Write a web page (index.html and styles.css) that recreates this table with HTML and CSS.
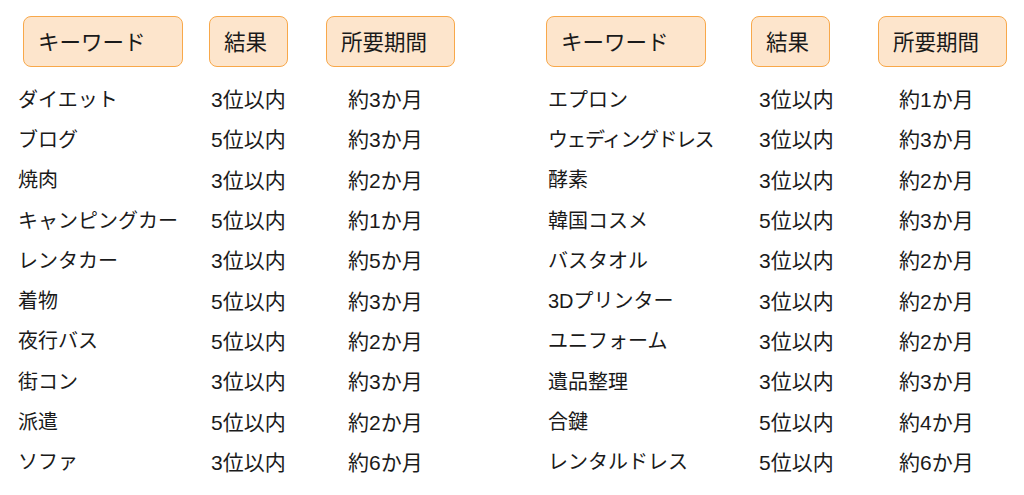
FILE: index.html
```html
<!DOCTYPE html>
<html lang="ja">
<head>
<meta charset="utf-8">
<link rel="stylesheet" href="styles.css">
</head>
<body>
<div class="page">
  <section class="panel panel-left">
    <div class="heads">
      <div class="head head-kw">キーワード</div>
      <div class="head head-res">結果</div>
      <div class="head head-per">所要期間</div>
    </div>
    <div class="rows">
      <div class="row"><span class="kw">ダイエット</span><span>3位以内</span><span>約3か月</span></div>
      <div class="row"><span class="kw">ブログ</span><span>5位以内</span><span>約3か月</span></div>
      <div class="row"><span class="kw">焼肉</span><span>3位以内</span><span>約2か月</span></div>
      <div class="row"><span class="kw">キャンピングカー</span><span>5位以内</span><span>約1か月</span></div>
      <div class="row"><span class="kw">レンタカー</span><span>3位以内</span><span>約5か月</span></div>
      <div class="row"><span class="kw">着物</span><span>5位以内</span><span>約3か月</span></div>
      <div class="row"><span class="kw">夜行バス</span><span>5位以内</span><span>約2か月</span></div>
      <div class="row"><span class="kw">街コン</span><span>3位以内</span><span>約3か月</span></div>
      <div class="row"><span class="kw">派遣</span><span>5位以内</span><span>約2か月</span></div>
      <div class="row"><span class="kw">ソファ</span><span>3位以内</span><span>約6か月</span></div>
    </div>
  </section>
  <section class="panel panel-right">
    <div class="heads">
      <div class="head head-kw">キーワード</div>
      <div class="head head-res">結果</div>
      <div class="head head-per">所要期間</div>
    </div>
    <div class="rows">
      <div class="row"><span class="kw">エプロン</span><span>3位以内</span><span>約1か月</span></div>
      <div class="row"><span class="kw kw-tight">ウェディングドレス</span><span>3位以内</span><span>約3か月</span></div>
      <div class="row"><span class="kw">酵素</span><span>3位以内</span><span>約2か月</span></div>
      <div class="row"><span class="kw">韓国コスメ</span><span>5位以内</span><span>約3か月</span></div>
      <div class="row"><span class="kw">バスタオル</span><span>3位以内</span><span>約2か月</span></div>
      <div class="row"><span class="kw">3Dプリンター</span><span>3位以内</span><span>約2か月</span></div>
      <div class="row"><span class="kw">ユニフォーム</span><span>3位以内</span><span>約2か月</span></div>
      <div class="row"><span class="kw">遺品整理</span><span>3位以内</span><span>約3か月</span></div>
      <div class="row"><span class="kw">合鍵</span><span>5位以内</span><span>約4か月</span></div>
      <div class="row"><span class="kw">レンタルドレス</span><span>5位以内</span><span>約6か月</span></div>
    </div>
  </section>
</div>
</body>
</html>
```
FILE: styles.css
```css
html, body {
  margin: 0;
  padding: 0;
  background: #ffffff;
}
body {
  font-family: "Liberation Sans", "Noto Sans CJK JP", sans-serif;
  color: #1a1a1a;
  width: 1024px;
  height: 495px;
  overflow: hidden;
}
.page {
  display: flex;
  padding-top: 16px;
}
.panel-left {
  width: 530px;
  padding-left: 18px;
}
.panel-right {
  flex: 1;
}
.heads {
  display: flex;
  height: 51px;
}
.head {
  box-sizing: border-box;
  height: 51px;
  display: flex;
  align-items: center;
  padding-left: 14px;
  padding-bottom: 2px;
  background: #fde5cc;
  border: 1.5px solid #f8a84a;
  border-radius: 8px;
  font-size: 21.5px;
}
.head-kw { width: 160px; }
.head-res { width: 79px; }
.head-per { width: 129px; }
.panel-left .heads { padding-left: 5px; }
.panel-left .head-res { margin-left: 26px; }
.panel-left .head-per { margin-left: 38px; }
.panel-right .heads { margin-left: -2px; }
.panel-right .head-res { margin-left: 45px; }
.panel-right .head-per { margin-left: 48px; }
.rows {
  margin-top: 11px;
}
.row {
  display: grid;
  height: 40.3px;
  align-items: center;
  font-size: 21px;
}
.kw {
  font-size: 20px;
}
.kw-tight {
  letter-spacing: -1.5px;
}
.panel-left .row { grid-template-columns: 193px 137px 1fr; }
.panel-right .row { grid-template-columns: 211px 140px 1fr; }
```
